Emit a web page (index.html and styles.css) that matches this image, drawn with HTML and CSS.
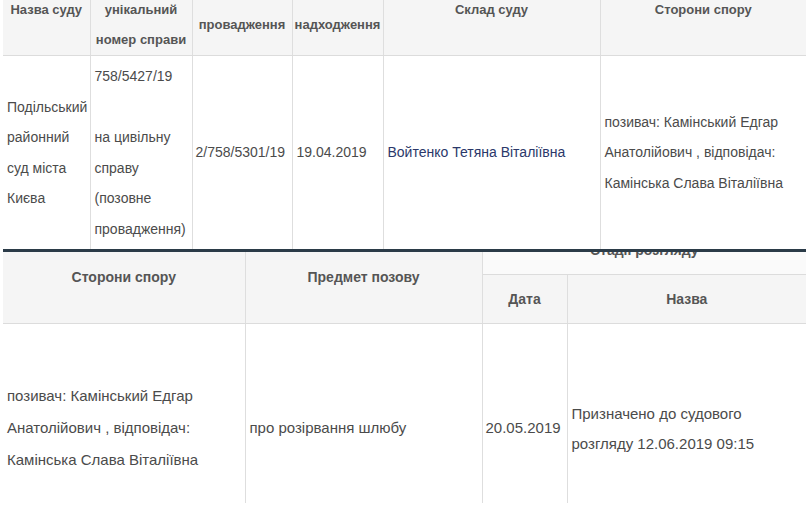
FILE: index.html
```html
<!DOCTYPE html>
<html lang="uk">
<head>
<meta charset="utf-8">
<title>Справа 758/5427/19</title>
<link rel="stylesheet" href="styles.css">
</head>
<body>
<div class="page">
  <table class="grid grid-top">
    <colgroup>
      <col class="c87"><col class="c102"><col class="c100"><col class="c91"><col class="c217"><col class="c206">
    </colgroup>
    <thead>
      <tr class="head-row">
        <th><div class="th-in">Назва суду</div></th>
        <th><div class="th-in">унікальний<br>номер справи</div></th>
        <th><div class="th-in th-mid">провадження</div></th>
        <th><div class="th-in th-mid">надходження</div></th>
        <th><div class="th-in">Склад суду</div></th>
        <th class="last"><div class="th-in">Сторони спору</div></th>
      </tr>
    </thead>
    <tbody>
      <tr class="body-row">
        <td>Подільський<br>районний<br>суд міста<br>Києва</td>
        <td class="top">758/5427/19<br><br>на цивільну<br>справу<br>(позовне<br>провадження)</td>
        <td class="tight">2/758/5301/19</td>
        <td>19.04.2019</td>
        <td><a class="judge" href="#">Войтенко Тетяна Віталіївна</a></td>
        <td class="last">позивач: Камінський Едгар<br>Анатолійович , відповідач:<br>Камінська Слава Віталіївна</td>
      </tr>
    </tbody>
  </table>

  <div class="divider"></div>

  <div class="sheet">
    <table class="grid grid-bottom">
      <colgroup>
        <col class="c242"><col class="c237"><col class="c85"><col class="c239">
      </colgroup>
      <thead>
        <tr class="stage-row">
          <th rowspan="2" class="head-cell">Сторони спору</th>
          <th rowspan="2" class="head-cell">Предмет позову</th>
          <th colspan="2" class="stage last">Стадії розгляду</th>
        </tr>
        <tr class="sub-row">
          <th class="head-cell">Дата</th>
          <th class="head-cell last">Назва</th>
        </tr>
      </thead>
      <tbody>
        <tr class="tall-row">
          <td>позивач: Камінський Едгар<br>Анатолійович , відповідач:<br>Камінська Слава Віталіївна</td>
          <td>про розірвання шлюбу</td>
          <td class="date">20.05.2019</td>
          <td class="last status">Призначено до судового<br>розгляду 12.06.2019 09:15</td>
        </tr>
      </tbody>
    </table>
  </div>
</div>
</body>
</html>
```

FILE: styles.css
```css
html, body {
  margin: 0;
  padding: 0;
  background: #ffffff;
}

body {
  font-family: "Liberation Sans", Arial, sans-serif;
  color: #4b4b4b;
  width: 810px;
  height: 506px;
  overflow: hidden;
}

.page {
  padding-left: 3px;
}

.grid {
  border-collapse: collapse;
  table-layout: fixed;
  width: 803px;
}

.grid th,
.grid td {
  border-right: 1px solid #dedede;
  padding: 0 4px;
  overflow: visible;
}

.grid .last {
  border-right: none;
}

/* ---------- top table ---------- */
.c87 { width: 87px; }
.c102 { width: 102px; }
.c100 { width: 100px; }
.c91 { width: 91px; }
.c217 { width: 217px; }
.c206 { width: 206px; }

.grid-top {
  font-size: 14px;
}

.grid-top th {
  background: #f5f5f5;
  color: #555555;
  font-size: 13px;
  font-weight: bold;
  text-align: center;
  vertical-align: top;
  height: 54px;
  border-bottom: 1px solid #dcdcdc;
  white-space: nowrap;
  padding: 0 2px;
}

.grid-top .th-in {
  margin-top: -5px;
  line-height: 30px;
}

.grid-top .th-in.th-mid {
  margin-top: 10px;
}

.grid-top td {
  vertical-align: middle;
  line-height: 30.6px;
  padding: 5px 3px 4px 4px;
  white-space: nowrap;
}

.grid-top td.top {
  vertical-align: top;
}

.grid-top td.tight {
  padding-left: 3px;
  padding-right: 1px;
}

.judge {
  color: #2b386a;
  text-decoration: none;
}

.divider {
  width: 803px;
  height: 3px;
  background: #2b3b48;
}

/* ---------- bottom table ---------- */
.c242 { width: 242px; }
.c237 { width: 237px; }
.c85 { width: 85px; }
.c239 { width: 239px; }

.sheet {
  height: 251px;
  overflow: hidden;
}

.grid-bottom {
  margin-top: -21px;
  font-size: 15px;
}

.grid-bottom th {
  color: #555555;
  font-size: 14px;
  font-weight: bold;
  text-align: center;
  vertical-align: middle;
  border-bottom: 1px solid #dcdcdc;
  white-space: nowrap;
}

.grid-bottom .head-cell {
  background: #f5f5f5;
}

.grid-bottom .stage {
  background: #fafafa;
  padding-bottom: 4px;
}

.stage-row {
  height: 44px;
}

.sub-row {
  height: 49px;
}

.grid-bottom td {
  vertical-align: middle;
  line-height: 32px;
  height: 204px;
  white-space: nowrap;
}

.grid-bottom td.date {
  padding: 0 2px 0 3px;
}

.grid-bottom td.status {
  line-height: 30px;
  padding-top: 3px;
}
```
